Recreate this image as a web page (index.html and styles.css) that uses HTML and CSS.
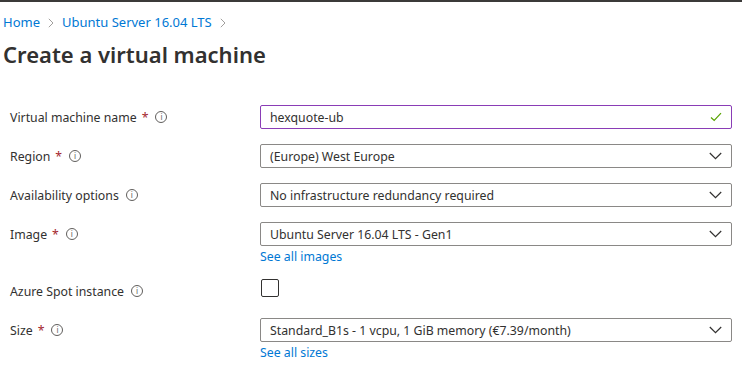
FILE: index.html
```html
<!DOCTYPE html>
<html lang="en">
<head>
    <meta charset="UTF-8">
    <meta name="viewport" content="width=device-width, initial-scale=1.0">
    <title>Create a virtual machine</title>
    <link rel="stylesheet" href="styles.css">
</head>
<body>
    <div class="topbar"></div>

    <div class="page">
        <nav class="breadcrumb">
            <a href="#">Home</a>
            <svg class="crumb-sep" width="6" height="10" viewBox="0 0 6 10"><path d="M0.8 0.8 L5 5 L0.8 9.2" fill="none" stroke="#a19f9d" stroke-width="1"/></svg>
            <a href="#">Ubuntu Server 16.04 LTS</a>
            <svg class="crumb-sep" width="6" height="10" viewBox="0 0 6 10"><path d="M0.8 0.8 L5 5 L0.8 9.2" fill="none" stroke="#a19f9d" stroke-width="1"/></svg>
        </nav>

        <h1>Create a virtual machine</h1>

        <form class="vm-form">
            <div class="form-row">
                <div class="label">Virtual machine name <span class="req">*</span> <span class="info">i</span></div>
                <div class="field">
                    <div class="textbox valid">
                        <span>hexquote-ub</span>
                        <svg class="check" width="12" height="10" viewBox="0 0 12 10"><path d="M1 5.5 L4.2 8.5 L11 1.2" fill="none" stroke="#57a300" stroke-width="1.2"/></svg>
                    </div>
                </div>
            </div>

            <div class="form-row">
                <div class="label">Region <span class="req">*</span> <span class="info">i</span></div>
                <div class="field">
                    <div class="dropdown">
                        <span>(Europe) West Europe</span>
                        <svg class="chevron" width="13" height="8" viewBox="0 0 13 8"><path d="M0.8 1 L6.5 6.7 L12.2 1" fill="none" stroke="#323130" stroke-width="1.2"/></svg>
                    </div>
                </div>
            </div>

            <div class="form-row">
                <div class="label">Availability options <span class="info">i</span></div>
                <div class="field">
                    <div class="dropdown">
                        <span>No infrastructure redundancy required</span>
                        <svg class="chevron" width="13" height="8" viewBox="0 0 13 8"><path d="M0.8 1 L6.5 6.7 L12.2 1" fill="none" stroke="#323130" stroke-width="1.2"/></svg>
                    </div>
                </div>
            </div>

            <div class="form-row">
                <div class="label">Image <span class="req">*</span> <span class="info">i</span></div>
                <div class="field">
                    <div class="dropdown">
                        <span>Ubuntu Server 16.04 LTS - Gen1</span>
                        <svg class="chevron" width="13" height="8" viewBox="0 0 13 8"><path d="M0.8 1 L6.5 6.7 L12.2 1" fill="none" stroke="#323130" stroke-width="1.2"/></svg>
                    </div>
                    <a href="#" class="field-link">See all images</a>
                </div>
            </div>

            <div class="form-row">
                <div class="label">Azure Spot instance <span class="info">i</span></div>
                <div class="field">
                    <div class="checkbox"></div>
                </div>
            </div>

            <div class="form-row">
                <div class="label">Size <span class="req">*</span> <span class="info">i</span></div>
                <div class="field">
                    <div class="dropdown">
                        <span>Standard_B1s - 1 vcpu, 1 GiB memory (€7.39/month)</span>
                        <svg class="chevron" width="13" height="8" viewBox="0 0 13 8"><path d="M0.8 1 L6.5 6.7 L12.2 1" fill="none" stroke="#323130" stroke-width="1.2"/></svg>
                    </div>
                    <a href="#" class="field-link">See all sizes</a>
                </div>
            </div>
        </form>
    </div>
</body>
</html>
```

FILE: styles.css
```css
* {
    margin: 0;
    padding: 0;
    box-sizing: border-box;
}

body {
    font-family: 'Segoe UI', 'Noto Sans', 'Open Sans', sans-serif;
    font-size: 12.3px;
    color: #323130;
    background: white;
}

.topbar {
    height: 2px;
    background: #3b3a39;
}

.page {
    padding: 0 3px;
}

.breadcrumb {
    display: flex;
    align-items: center;
    height: 18px;
    margin-top: 11px;
    line-height: 18px;
    font-size: 13px;
}

.breadcrumb a {
    color: #0078d4;
    text-decoration: none;
}

.crumb-sep {
    margin: 2px 8px 0 8px;
}

h1 {
    font-size: 22px;
    font-weight: 600;
    line-height: 32px;
    margin-top: 7px;
    color: #323130;
}

.vm-form {
    margin-top: 35px;
    padding-left: 7px;
}

.form-row {
    display: grid;
    grid-template-columns: 250px 472px;
    margin-bottom: 15px;
}

.label {
    display: flex;
    align-items: center;
    height: 24px;
    white-space: nowrap;
}

.req {
    color: #a4262c;
    margin-left: 5px;
}

.info {
    display: inline-flex;
    align-items: center;
    justify-content: center;
    width: 12px;
    height: 12px;
    margin-left: 7px;
    border: 1px solid #605e5c;
    border-radius: 50%;
    font-size: 8px;
    line-height: 1;
    color: #605e5c;
}

.textbox, .dropdown {
    display: flex;
    align-items: center;
    justify-content: space-between;
    height: 24px;
    padding: 0 9px;
    border: 1px solid #8a8886;
    border-radius: 2px;
}

.textbox.valid {
    border-color: #8a3db6;
}

.field-link {
    display: block;
    margin-top: 2px;
    margin-bottom: -2px;
    color: #0078d4;
    text-decoration: none;
    line-height: 18px;
}

.checkbox {
    width: 18px;
    height: 18px;
    margin-left: 1px;
    border: 1px solid #323130;
    border-radius: 2px;
}
```
